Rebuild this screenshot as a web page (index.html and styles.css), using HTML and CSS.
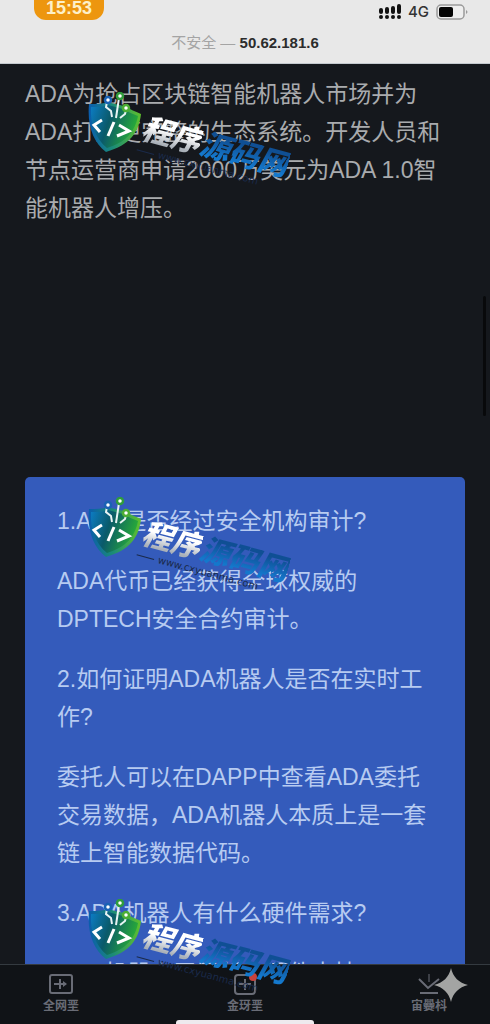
FILE: index.html
```
<!DOCTYPE html>
<html lang="zh-CN">
<head>
    <meta charset="UTF-8">
    <meta name="viewport" content="width=device-width, initial-scale=1.0">
    <title>ADA</title>
    <link rel="stylesheet" href="styles.css">
</head>
<body>
    <!-- shared watermark logo -->
    <svg class="defs" width="0" height="0" aria-hidden="true">
        <defs>
            <linearGradient id="rim" x1="0" y1="0" x2="1" y2="0">
                <stop offset="0" stop-color="#0a5cae"/>
                <stop offset="0.45" stop-color="#1a8a78"/>
                <stop offset="1" stop-color="#5fc02c"/>
            </linearGradient>
            <linearGradient id="face" x1="0" y1="0" x2="1" y2="0.3">
                <stop offset="0" stop-color="#0c7cc4"/>
                <stop offset="0.45" stop-color="#0a5a6a"/>
                <stop offset="1" stop-color="#27a83a"/>
            </linearGradient>
            <symbol id="shield" viewBox="0 0 54 62">
                <path d="M1 12C8 12 14 12 19 10L36 14C42 17 48 20 53 22C51 40 42 53 18 60C5 50-1 33 1 12Z" fill="url(#rim)"/>
                <path d="M3 15C10 15 15 15 20 13L35 17C40 20 45 22 50 24C47 39 39 50 19 56C8 47 2 33 3 15Z" fill="url(#face)"/>
                <g fill="none" stroke="#e8f4f4" stroke-width="2">
                    <path d="M19 10L18 15L23 19L24 25"/>
                    <path d="M31 6L28 26"/>
                    <path d="M38 18L37 22L32 26"/>
                </g>
                <g fill="#fff" stroke-width="2.5">
                    <circle cx="20" cy="8" r="3" stroke="#1a62b4"/>
                    <circle cx="32" cy="4" r="3" stroke="#2f9c3c"/>
                    <circle cx="38" cy="16" r="3" stroke="#4cae34"/>
                </g>
                <g fill="none" stroke="#fff" stroke-width="3">
                    <path d="M14 28L6 33L12 40"/>
                    <path d="M26 30L20 44"/>
                    <path d="M31 33L41 39L29 44"/>
                </g>
            </symbol>
        </defs>
    </svg>

    <header class="topbar">
        <div class="status">
            <span class="clock">15:53</span>
            <div class="status-right">
                <svg width="22" height="16" viewBox="0 0 22 16" fill="#111">
                    <rect x="0" y="4" width="4" height="6" rx="2"/>
                    <rect x="6" y="3" width="4" height="7" rx="2"/>
                    <rect x="12" y="2" width="4" height="8" rx="2"/>
                    <rect x="18" y="0" width="4" height="10" rx="2"/>
                    <circle cx="2" cy="13" r="2"/>
                    <circle cx="8" cy="13" r="2"/>
                    <circle cx="14" cy="13" r="2"/>
                    <circle cx="20" cy="13" r="2"/>
                </svg>
                <span class="network">4G</span>
                <svg width="32" height="16" viewBox="0 0 32 16">
                    <rect x="1" y="1" width="27" height="14" rx="4" fill="#eee" stroke="#9a9a9a" stroke-width="1.5"/>
                    <rect x="3" y="3" width="14" height="10" rx="2" fill="#050505"/>
                    <path d="M30 6C32 7 32 9 30 10Z" fill="#9a9a9a"/>
                </svg>
            </div>
        </div>
        <div class="address"><span class="insecure">不安全 —</span> 50.62.181.6</div>
    </header>

    <main class="content">
        <p class="intro">ADA为抢占区块链智能机器人市场并为ADA打造更完整的生态系统。开发人员和节点运营商申请2000万美元为ADA 1.0智能机器人增压。</p>
        <section class="faq">
            <p>1.ADA是否经过安全机构审计?</p>
            <p>ADA代币已经获得全球权威的DPTECH安全合约审计。</p>
            <p>2.如何证明ADA机器人是否在实时工作?</p>
            <p>委托人可以在DAPP中查看ADA委托交易数据，ADA机器人本质上是一套链上智能数据代码。</p>
            <p>3.ADA机器人有什么硬件需求?</p>
            <p>ADA机器人无需任何硬件支持。</p>
        </section>
    </main>

    <nav class="tabbar">
        <a href="#" class="tab">
            <svg width="24" height="22" viewBox="0 0 24 22" fill="none" stroke="currentColor" stroke-width="2">
                <rect x="1" y="2" width="22" height="18" rx="2"/>
                <path d="M5 11H17M11 6V16"/>
                <path d="M14 8L18 11L14 14Z" fill="currentColor" stroke="none"/>
            </svg>
            <span>全网垩</span>
        </a>
        <a href="#" class="tab">
            <svg width="24" height="22" viewBox="0 0 24 22" fill="none" stroke="currentColor" stroke-width="2">
                <rect x="2" y="2" width="20" height="19" rx="3"/>
                <path d="M6 11H18M12 6V17"/>
                <circle cx="20" cy="4" r="4" fill="#c8423c" stroke="none"/>
            </svg>
            <span>金玡垩</span>
        </a>
        <a href="#" class="tab">
            <svg width="24" height="22" viewBox="0 0 24 22" fill="none" stroke="currentColor" stroke-width="2">
                <path d="M2 6L11 15L22 6M3 20H21"/>
                <path d="M12 1V9" stroke-width="1"/>
            </svg>
            <span>宙爨枓</span>
        </a>
        <span class="home-line"></span>
    </nav>

    <span class="scroll-thumb"></span>

    <div class="watermark first">
        <svg class="logo"><use href="#shield"/></svg>
        <div class="brand">
            <div class="brand-name"><span class="silver">程序</span><span class="blue">源码网</span></div>
            <div class="brand-url">www.cxyuanma.com</div>
        </div>
    </div>
    <div class="watermark second">
        <svg class="logo"><use href="#shield"/></svg>
        <div class="brand">
            <div class="brand-name"><span class="silver">程序</span><span class="blue">源码网</span></div>
            <div class="brand-url">www.cxyuanma.com</div>
        </div>
    </div>
    <div class="watermark third">
        <svg class="logo"><use href="#shield"/></svg>
        <div class="brand">
            <div class="brand-name"><span class="silver">程序</span><span class="blue">源码网</span></div>
            <div class="brand-url">www.cxyuanma.com</div>
        </div>
    </div>

    <svg class="sparkle" viewBox="0 0 34 34"><path d="M17 0C19 9 25 15 34 17C25 19 19 25 17 34C15 25 9 19 0 17C9 15 15 9 17 0Z" fill="#a3a4a3"/></svg>
</body>
</html>
```
FILE: styles.css
```
* {
    box-sizing: border-box;
}
body {
    display: flex;
    flex-direction: column;
    position: relative;
    height: 100vh;
    margin: 0;
    overflow: hidden;
    background: #15181d;
    font-family: "Liberation Sans", "Noto Sans CJK SC", sans-serif;
}
.defs {
    position: absolute;
}
.topbar {
    flex: none;
    background: #e8e8e8;
    border-bottom: 1px solid #c3c9ce;
    padding-bottom: 9px;
}
.status {
    display: flex;
    justify-content: space-between;
    align-items: flex-start;
    height: 32px;
    padding: 0 22px 0 34px;
}
.clock {
    height: 20px;
    padding: 0 12px;
    border-radius: 0 0 12px 12px;
    background: #ed960f;
    color: #fdf0c8;
    font-size: 18px;
    font-weight: bold;
    line-height: 16px;
}
.status-right {
    display: flex;
    align-items: center;
    gap: 7px;
    padding-top: 4px;
}
.network {
    color: #333;
    font-family: Inter, sans-serif;
    font-size: 15px;
    font-weight: 500;
    line-height: 16px;
}
.address {
    color: #2c2c2c;
    font-size: 15px;
    font-weight: bold;
    line-height: 22px;
    text-align: center;
}
.insecure {
    color: #a4a4a4;
    font-weight: normal;
}
.content {
    flex: 1;
    min-height: 0;
    overflow: hidden;
    padding: 11px 25px 0;
    font-size: 23px;
    line-height: 38px;
}
.intro {
    margin: 0 7px 250px 0;
    color: #a9abae;
}
.faq {
    padding: 25px 32px;
    border-radius: 5px;
    background: #345bbb;
    color: #b7cbf1;
}
.faq p {
    margin: 0 0 22px;
}
.tabbar {
    flex: none;
    display: flex;
    justify-content: space-between;
    position: relative;
    height: 60px;
    padding: 8px 43px 0;
    border-top: 1px solid #343a40;
    background: #101317;
}
.tab {
    display: flex;
    flex-direction: column;
    align-items: center;
    gap: 3px;
    color: #696c76;
    font-size: 12px;
    font-weight: bold;
    line-height: 16px;
    text-decoration: none;
}
.home-line {
    position: absolute;
    left: 36%;
    right: 36%;
    bottom: 0;
    height: 4px;
    border-radius: 3px 3px 0 0;
    background: #eeeaee;
}
.scroll-thumb {
    position: absolute;
    top: 296px;
    right: 4px;
    width: 3px;
    height: 120px;
    border-radius: 2px;
    background: #08090b;
}
.watermark {
    position: absolute;
    left: 88px;
    display: flex;
}
.first {
    top: 92px;
}
.second {
    top: 497px;
}
.third {
    top: 899px;
}
.logo {
    flex: none;
    width: 54px;
    height: 62px;
    overflow: visible;
}
.brand {
    padding-top: 20px;
    transform: rotate(15deg);
    transform-origin: 0 38px;
}
.brand-name {
    font-size: 30px;
    font-style: italic;
    font-weight: 900;
    line-height: 32px;
    white-space: nowrap;
}
.brand-name span {
    background-clip: text;
    -webkit-background-clip: text;
    color: transparent;
}
.silver {
    background-image: linear-gradient(#fff 40%, #a9b0b8 85%);
}
.blue {
    background-image: linear-gradient(#0f4f94 20%, #1478cc 80%);
}
.brand-url {
    display: flex;
    align-items: center;
    gap: 4px;
    color: #1a2a4a;
    font-family: "DejaVu Sans", sans-serif;
    font-size: 10px;
    line-height: 12px;
}
.brand-url::before {
    content: "";
    width: 18px;
    height: 1px;
    background: #1a2a4a;
}
.sparkle {
    position: absolute;
    right: 22px;
    bottom: 22px;
    width: 34px;
    height: 34px;
}
```
